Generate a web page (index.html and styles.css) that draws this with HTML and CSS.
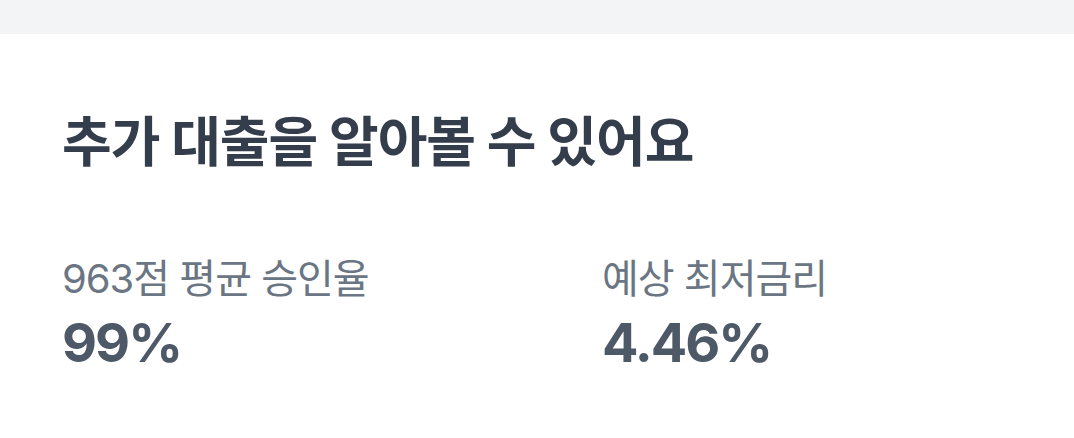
FILE: index.html
```html
<!DOCTYPE html>
<html lang="ko">
<head>
    <meta charset="UTF-8">
    <meta name="viewport" content="width=device-width, initial-scale=1.0">
    <title>추가 대출</title>
    <link rel="stylesheet" href="styles.css">
</head>
<body>
    <div class="top-band"></div>
    <section class="loan-card">
        <h2 class="loan-title">추가 대출을 알아볼 수 있어요</h2>
        <div class="stats">
            <div class="stat">
                <div class="stat-label">963점 평균 승인율</div>
                <div class="stat-value">99%</div>
            </div>
            <div class="stat">
                <div class="stat-label">예상 최저금리</div>
                <div class="stat-value">4.46%</div>
            </div>
        </div>
    </section>
</body>
</html>
```

FILE: styles.css
```css
body {
    font-family: Inter, "Noto Sans CJK KR", sans-serif;
    margin: 0;
    padding: 0;
    background-color: #fff;
}
.top-band {
    height: 34px;
    background-color: #f2f4f6;
}
.loan-card {
    padding: 77px 62px 0;
}
.loan-title {
    margin: 0;
    font-size: 54px;
    font-weight: 700;
    line-height: 64px;
    letter-spacing: -1px;
    color: #333d4b;
}
.stats {
    display: grid;
    grid-template-columns: 540px 1fr;
    margin-top: 79px;
}
.stat-label {
    font-size: 40px;
    line-height: 50px;
    letter-spacing: -1px;
    color: #6b7684;
}
.stat-value {
    margin-top: 6px;
    font-size: 54px;
    font-weight: 700;
    line-height: 66px;
    letter-spacing: -2px;
    color: #4e5968;
}
```
